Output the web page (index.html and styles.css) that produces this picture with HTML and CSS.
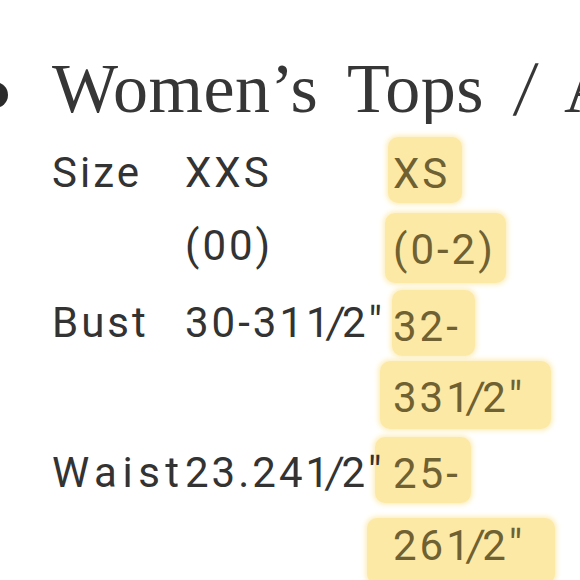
FILE: index.html
```html
<!DOCTYPE html>
<html lang="en">
<head>
<meta charset="utf-8">
<title>Women's Tops size chart</title>
<link rel="stylesheet" href="styles.css">
</head>
<body>
  <div class="title-row">
    <span class="dot"></span>
    <h1 class="title">Women’s Tops <span class="slash">/</span> A</h1>
  </div>
  <div class="chart">
    <div class="label">Size</div>
    <div class="val">XXS<br>(00)</div>
    <div class="hlcol">
      <span class="hl hl-1">XS</span>
      <span class="hl hl-2">(0-2)</span>
    </div>

    <div class="label">Bust</div>
    <div class="val">30-311<span class="fs">/</span>2"</div>
    <div class="hlcol">
      <span class="hl hl-3">32-</span>
      <span class="hl hl-4">331<span class="fs">/</span>2"</span>
    </div>

    <div class="label label-wide">Waist</div>
    <div class="val">23.241<span class="fs">/</span>2"</div>
    <div class="hlcol">
      <span class="hl hl-5">25-</span>
      <span class="hl hl-6">261<span class="fs">/</span>2"</span>
    </div>
  </div>
</body>
</html>
```

FILE: styles.css
```css
html, body {
  margin: 0;
  padding: 0;
  background: #ffffff;
  overflow: hidden;
}

body {
  width: 580px;
  height: 580px;
  color: #333333;
}

.title-row {
  display: flex;
  align-items: flex-start;
  padding-top: 54px;
  width: 580px;
  overflow: hidden;
}

.dot {
  flex: none;
  width: 26px;
  height: 26px;
  border-radius: 50%;
  background: #2b2b2b;
  margin-left: -18px;
  margin-top: 28px;
  margin-right: 44px;
}

.title {
  margin: 0;
  font-family: "Liberation Serif", serif;
  font-weight: 400;
  font-size: 70px;
  line-height: 1;
  letter-spacing: 0.5px;
  word-spacing: 12px;
  color: #363636;
  white-space: nowrap;
}

.slash {
  display: inline-block;
  transform: scaleY(1.12) skewX(-8deg);
  margin: 0 2px;
}

.chart {
  display: grid;
  grid-template-columns: 133px 208px 180px;
  margin-top: 12px;
  padding-left: 52px;
  font-family: Roboto, "Liberation Sans", sans-serif;
  font-size: 42px;
  line-height: 73px;
  letter-spacing: 3px;
  color: #333333;
}

.label, .val {
  white-space: nowrap;
}

.val {
  position: relative;
  z-index: 1;
}

.label-wide {
  letter-spacing: 5.5px;
}

.fs {
  display: inline-block;
  margin: 0 -5px 0 -6px;
  transform: scaleY(1.05) skewX(-6deg);
}

.hlcol {
  display: flex;
  flex-direction: column;
  align-items: flex-start;
  white-space: nowrap;
}

.hl {
  display: block;
  height: 66px;
  line-height: 73px;
  color: #6f6131;
  background: #fde9a6;
  border-radius: 10px;
  box-shadow: 0 0 5px 2px #fdefc0;
}

.hl-1 { margin: 1px 0 6px -5px; padding: 0 12px 0 5px; }
.hl-2 { margin: 4px 0 3px -8px; padding: 0 10px 0 8px; height: 70px; }
.hl-3 { margin: 4px 0 5px -1px; padding: 0 14px 0 1px; }
.hl-4 { margin: 0 0 7px -13px; padding: 0 26px 0 13px; height: 68px; }
.hl-5 { margin: 1px 0 6px -18px; padding: 0 10px 0 18px; }
.hl-6 { margin: 9px 0 0 -26px; padding: 0 30px 0 26px; height: 66px; line-height: 56px; }
```
